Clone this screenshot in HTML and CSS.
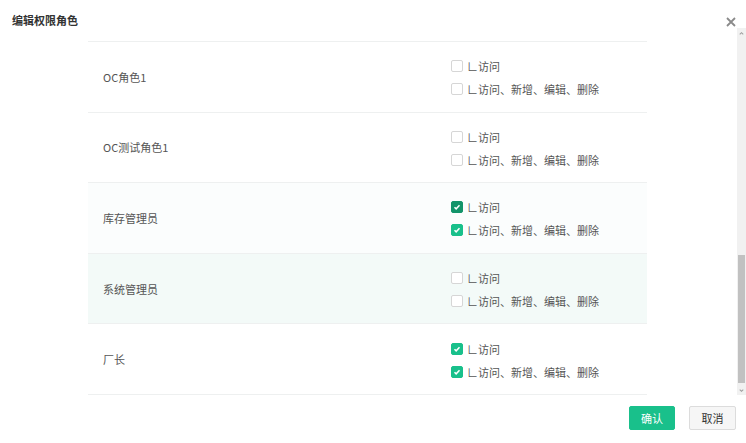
FILE: index.html
```html
<!DOCTYPE html>
<html lang="zh">
<head>
<meta charset="utf-8">
<link rel="stylesheet" href="styles.css">
</head>
<body>
<div class="dialog">
  <div class="header">
    <span class="title">编辑权限角色</span>
    <svg class="close" viewBox="0 0 10 10"><path d="M1 1l8 8M9 1l-8 8" /></svg>
  </div>
  <div class="main">
    <div class="content">
      <div class="table">
        <div class="row">
          <div class="name">OC角色1</div>
          <div class="perms">
            <label class="perm"><span class="box"></span><span>∟访问</span></label>
            <label class="perm"><span class="box"></span><span>∟访问、新增、编辑、删除</span></label>
          </div>
        </div>
        <div class="row">
          <div class="name">OC测试角色1</div>
          <div class="perms">
            <label class="perm"><span class="box"></span><span>∟访问</span></label>
            <label class="perm"><span class="box"></span><span>∟访问、新增、编辑、删除</span></label>
          </div>
        </div>
        <div class="row row-light">
          <div class="name">库存管理员</div>
          <div class="perms">
            <label class="perm"><span class="box checked dark"><svg viewBox="0 0 12 12"><path d="M3 6.2l2 2 4-4.2" /></svg></span><span>∟访问</span></label>
            <label class="perm"><span class="box checked"><svg viewBox="0 0 12 12"><path d="M3 6.2l2 2 4-4.2" /></svg></span><span>∟访问、新增、编辑、删除</span></label>
          </div>
        </div>
        <div class="row row-hover">
          <div class="name">系统管理员</div>
          <div class="perms">
            <label class="perm"><span class="box"></span><span>∟访问</span></label>
            <label class="perm"><span class="box"></span><span>∟访问、新增、编辑、删除</span></label>
          </div>
        </div>
        <div class="row">
          <div class="name">厂长</div>
          <div class="perms">
            <label class="perm"><span class="box checked"><svg viewBox="0 0 12 12"><path d="M3 6.2l2 2 4-4.2" /></svg></span><span>∟访问</span></label>
            <label class="perm"><span class="box checked"><svg viewBox="0 0 12 12"><path d="M3 6.2l2 2 4-4.2" /></svg></span><span>∟访问、新增、编辑、删除</span></label>
          </div>
        </div>
      </div>
    </div>
    <div class="scrollbar">
      <div class="arrow up">
        <svg viewBox="0 0 8 8"><path d="M2 5l2-2 2 2" /></svg>
      </div>
      <div class="track"><div class="thumb"></div></div>
      <div class="arrow down">
        <svg viewBox="0 0 8 8"><path d="M2 3l2 2 2-2" /></svg>
      </div>
    </div>
  </div>
  <div class="footer">
    <button class="btn btn-primary">确认</button>
    <button class="btn btn-default">取消</button>
  </div>
</div>
</body>
</html>
```
FILE: styles.css
```css
html, body {
  margin: 0;
  padding: 0;
  background: #fff;
}
body {
  font-family: "Noto Sans CJK SC", "Noto Sans", sans-serif;
  font-size: 11px;
  color: #333;
}
.dialog {
  width: 746px;
  height: 443px;
  display: flex;
  flex-direction: column;
  overflow: hidden;
}
.header {
  height: 28px;
  display: flex;
  align-items: flex-start;
  justify-content: space-between;
  padding: 0 10px 0 12px;
  box-sizing: border-box;
  flex: none;
}
.title {
  font-weight: bold;
  font-size: 11px;
  line-height: 14px;
  color: #333;
  padding-top: 13px;
}
.close {
  width: 10px;
  height: 10px;
  margin-top: 17px;
  fill: none;
  stroke: #8a8a8a;
  stroke-width: 1.8;
}
.main {
  height: 367px;
  display: flex;
  flex: none;
}
.content {
  flex: 1;
  overflow: hidden;
  padding-top: 13px;
}
.table {
  margin-left: 88px;
  width: 559px;
  border-top: 1px solid #eef0f0;
}
.row {
  height: 69.6px;
  display: flex;
  align-items: center;
  border-bottom: 1px solid #eef0f0;
}
.row-light {
  background: #fbfdfd;
}
.row-hover {
  background: #f3faf8;
}
.name {
  width: 363px;
  box-sizing: border-box;
  padding-left: 15px;
  color: #555;
  font-size: 11px;
}
.perms {
  display: flex;
  flex-direction: column;
  gap: 6px;
  padding-top: 2px;
}
.perm {
  display: flex;
  align-items: center;
  gap: 4px;
  height: 17px;
  color: #555;
}
.box {
  width: 10px;
  height: 10px;
  border: 1px solid #d6d6d6;
  border-radius: 2px;
  background: #fff;
  display: flex;
  align-items: center;
  justify-content: center;
}
.box.checked {
  background: #19c08b;
  border-color: #19c08b;
}
.box.checked.dark {
  background: #13946a;
  border-color: #13946a;
}
.box svg {
  width: 10px;
  height: 10px;
  fill: none;
  stroke: #fff;
  stroke-width: 1.8;
}
.scrollbar {
  width: 9px;
  flex: none;
  display: flex;
  flex-direction: column;
  background: #f1f1f1;
}
.arrow {
  height: 10px;
  display: flex;
  align-items: center;
  justify-content: center;
}
.arrow svg {
  width: 7px;
  height: 7px;
  fill: none;
  stroke: #a0a0a0;
  stroke-width: 1.2;
}
.track {
  flex: 1;
  display: flex;
  flex-direction: column;
  justify-content: flex-end;
  padding-bottom: 2px;
}
.thumb {
  height: 128px;
  background: #c1c1c1;
  margin: 0 1px;
}
.footer {
  flex: 1;
  display: flex;
  justify-content: flex-end;
  align-items: flex-start;
  gap: 14px;
  padding: 11px 10px 0 0;
}
.btn {
  height: 24px;
  width: 47px;
  font-family: "Noto Sans CJK SC", sans-serif;
  font-size: 11px;
  border-radius: 2px;
  padding: 0;
  cursor: pointer;
}
.btn-primary {
  background: #19c08b;
  color: #fff;
  border: 1px solid #19c08b;
  width: 46px;
}
.btn-default {
  background: #f6f6f6;
  color: #333;
  border: 1px solid #dcdcdc;
}
```
